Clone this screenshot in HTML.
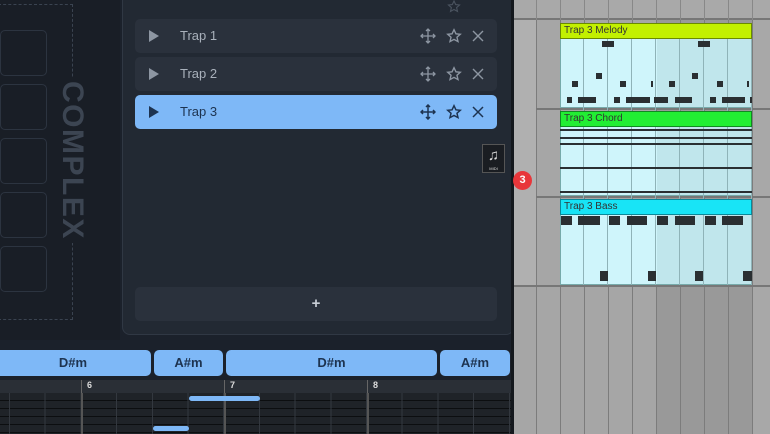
<!DOCTYPE html>
<html><head><style>
*{margin:0;padding:0;box-sizing:border-box}
body{width:770px;height:434px;overflow:hidden;background:#1b212b;font-family:"Liberation Sans",sans-serif;position:relative}
.a{position:absolute}
.pad{position:absolute;left:0;width:47px;height:46px;border:1px solid #2c3440;border-radius:5px}
.row{position:absolute;left:135px;width:362px;height:34px;border-radius:5px;background:#2a313c;color:#a9b1bb;font-size:13px}
.row .t{position:absolute;left:45px;top:9px}
.tri{position:absolute;left:14px;top:11px;width:0;height:0;border-left:10px solid #8d96a2;border-top:6px solid transparent;border-bottom:6px solid transparent}
.ic{position:absolute;top:9px}
.chord{position:absolute;top:350px;height:26px;background:#7eb8f7;border-radius:5px;color:#1d3350;font-weight:bold;font-size:13px;text-align:center;line-height:26px}
.n{position:absolute;background:#2a2f32}
.cl{position:absolute;left:560px;width:192px}
</style></head><body>
<div class="a" style="left:0;top:0;width:120px;height:340px;background:#191e26"></div>
<div class="a" style="left:-2px;top:4px;width:75px;height:316px;border:1px dashed #3a4350;border-left:none"></div>
<div class="pad" style="top:30px"></div><div class="pad" style="top:84px"></div><div class="pad" style="top:138px"></div><div class="pad" style="top:192px"></div><div class="pad" style="top:246px"></div>
<div class="a" style="left:72px;top:78px;width:0;height:0"><div style="transform:rotate(90deg);transform-origin:0 0;position:absolute;left:15px;top:0;font-size:30px;font-weight:bold;color:#3c4552;letter-spacing:1.5px;white-space:nowrap;background:#191e26;padding:0 3px;line-height:30px">COMPLEX</div></div>
<div class="a" style="left:122px;top:-10px;width:392px;height:345px;background:#222933;border:1px solid #303844;border-radius:8px"></div>
<svg class="a" style="left:447px;top:0" width="14" height="13" viewBox="0 0 14 13"><path d="M7 1l1.7 3.6 3.8.4-2.9 2.6.9 3.8L7 9.5 3.5 11.4l.9-3.8L1.5 5l3.8-.4z" fill="none" stroke="#4b5460" stroke-width="1.1"/></svg>
<div class="row" style="top:19px"><div class="tri"></div><div class="t">Trap 1</div>
<svg class="ic" style="left:285px" width="16" height="16" viewBox="0 0 16 16" fill="none" stroke="#8d96a2" stroke-width="1.3"><path d="M8 1v14M1 8h14M6 3l2-2 2 2M6 13l2 2 2-2M3 6L1 8l2 2M13 6l2 2-2 2"/></svg>
<svg class="ic" style="left:311px" width="16" height="16" viewBox="0 0 14 13"><path d="M7 1l1.7 3.6 3.8.4-2.9 2.6.9 3.8L7 9.5 3.5 11.4l.9-3.8L1.5 5l3.8-.4z" fill="none" stroke="#8d96a2" stroke-width="1.2"/></svg>
<svg class="ic" style="left:337px;top:11px" width="12" height="12" viewBox="0 0 12 12" stroke="#8d96a2" stroke-width="1.4"><path d="M1 1l10 10M11 1L1 11"/></svg></div>
<div class="row" style="top:57px"><div class="tri"></div><div class="t">Trap 2</div>
<svg class="ic" style="left:285px" width="16" height="16" viewBox="0 0 16 16" fill="none" stroke="#8d96a2" stroke-width="1.3"><path d="M8 1v14M1 8h14M6 3l2-2 2 2M6 13l2 2 2-2M3 6L1 8l2 2M13 6l2 2-2 2"/></svg>
<svg class="ic" style="left:311px" width="16" height="16" viewBox="0 0 14 13"><path d="M7 1l1.7 3.6 3.8.4-2.9 2.6.9 3.8L7 9.5 3.5 11.4l.9-3.8L1.5 5l3.8-.4z" fill="none" stroke="#8d96a2" stroke-width="1.2"/></svg>
<svg class="ic" style="left:337px;top:11px" width="12" height="12" viewBox="0 0 12 12" stroke="#8d96a2" stroke-width="1.4"><path d="M1 1l10 10M11 1L1 11"/></svg></div>
<div class="row" style="top:95px;background:#7eb8f7;color:#1d3350"><div class="tri" style="border-left-color:#1d3350"></div><div class="t">Trap 3</div>
<svg class="ic" style="left:285px" width="16" height="16" viewBox="0 0 16 16" fill="none" stroke="#1d3350" stroke-width="1.5"><path d="M8 1v14M1 8h14M6 3l2-2 2 2M6 13l2 2 2-2M3 6L1 8l2 2M13 6l2 2-2 2"/></svg>
<svg class="ic" style="left:311px" width="16" height="16" viewBox="0 0 14 13"><path d="M7 1l1.7 3.6 3.8.4-2.9 2.6.9 3.8L7 9.5 3.5 11.4l.9-3.8L1.5 5l3.8-.4z" fill="none" stroke="#1d3350" stroke-width="1.3"/></svg>
<svg class="ic" style="left:337px;top:11px" width="12" height="12" viewBox="0 0 12 12" stroke="#1d3350" stroke-width="1.5"><path d="M1 1l10 10M11 1L1 11"/></svg></div>
<div class="a" style="left:135px;top:287px;width:362px;height:34px;border-radius:5px;background:#2a313c;color:#c8ced6;text-align:center;line-height:34px;font-size:15px;font-weight:bold">+</div>
<div class="a" style="left:482px;top:144px;width:23px;height:29px;background:#1a1d22;border:1px solid #555;color:#ddd;font-size:15px;text-align:center;line-height:22px">♫<div style="font-size:4px;line-height:4px">MIDI</div></div>
<div class="chord" style="left:-5px;width:156px">D#m</div>
<div class="chord" style="left:154px;width:69px">A#m</div>
<div class="chord" style="left:226px;width:211px">D#m</div>
<div class="chord" style="left:440px;width:70px">A#m</div>
<div class="a" style="left:0;top:380px;width:511px;height:13px;background:#2a2f36;color:#ddd;font-size:9px;font-weight:bold">
<span class="a" style="left:81px;top:0;height:13px;border-left:1px solid #666;padding-left:5px">6</span>
<span class="a" style="left:224px;top:0;height:13px;border-left:1px solid #666;padding-left:5px">7</span>
<span class="a" style="left:367px;top:0;height:13px;border-left:1px solid #666;padding-left:5px">8</span></div>
<div class="a" style="left:0;top:393px;width:511px;height:41px;background:repeating-linear-gradient(#1f2328 0 7px,#0c0e10 7px 8px)"></div>
<div class="a" style="left:0;top:393px;width:511px;height:41px;background:repeating-linear-gradient(90deg,transparent 0 9px,#33383f 9px 10px,transparent 10px 35.7px)"></div>
<div class="a" style="left:81px;top:393px;width:2px;height:41px;background:#555"></div>
<div class="a" style="left:224px;top:393px;width:2px;height:41px;background:#555"></div>
<div class="a" style="left:367px;top:393px;width:2px;height:41px;background:#555"></div>
<div class="a" style="left:189px;top:396px;width:71px;height:5px;background:#7eb8f7;border-radius:3px"></div>
<div class="a" style="left:153px;top:426px;width:36px;height:5px;background:#7eb8f7;border-radius:3px"></div>
<div class="a" style="left:511px;top:0;width:3px;height:434px;background:#14181d"></div>
<div class="a" style="left:514px;top:0;width:256px;height:434px;background:linear-gradient(90deg,#a6a6a6 0 142px,#999 142px 238px,#a8a8a8 238px)"></div>
<div class="a" style="left:514px;top:0;width:256px;height:434px;background:repeating-linear-gradient(90deg,transparent 0 22px,#7c7c7c 22px 23px,transparent 23px 24px)"></div>
<div class="a" style="left:514px;top:0;width:256px;height:20px;background:#a9a9a9;border-bottom:2px solid #777"></div>
<div class="a" style="left:514px;top:0;width:256px;height:20px;background:repeating-linear-gradient(90deg,transparent 0 22px,#888 22px 23px,transparent 23px 24px)"></div>
<div class="a" style="left:514px;top:108px;width:256px;height:2px;background:#777"></div>
<div class="a" style="left:514px;top:196px;width:256px;height:2px;background:#777"></div>
<div class="a" style="left:514px;top:285px;width:256px;height:2px;background:#777"></div>
<div class="a" style="left:514px;top:20px;width:22px;height:265px;background:#b0b0b0"></div>
<div class="cl" style="top:23px;height:85px;background:linear-gradient(90deg,#cff5fb 0 96px,#c0e6ec 96px);border:1px solid #7aa"></div>
<div class="cl" style="top:111px;height:85px;background:linear-gradient(90deg,#cff5fb 0 96px,#c0e6ec 96px);border:1px solid #7aa"></div>
<div class="cl" style="top:199px;height:86px;background:linear-gradient(90deg,#cff5fb 0 96px,#c0e6ec 96px);border:1px solid #7aa"></div>
<div class="cl" style="top:23px;height:262px;background:repeating-linear-gradient(90deg,transparent 0 23px,#8fb3b8 23px 24px)"></div>
<div class="cl" style="top:23px;height:16px;background:#c2f000;border:1px solid #6a8a00;font-size:10px;color:#333;padding-left:3px;line-height:14px">Trap 3 Melody</div>
<div class="cl" style="top:111px;height:16px;background:#22ee33;border:1px solid #118822;font-size:10px;color:#333;padding-left:3px;line-height:14px">Trap 3 Chord</div>
<div class="cl" style="top:199px;height:16px;background:#18e4f6;border:1px solid #0a8899;font-size:10px;color:#333;padding-left:3px;line-height:14px">Trap 3 Bass</div>
<div class="n" style="left:602px;top:41px;width:12px;height:6px"></div><div class="n" style="left:698px;top:41px;width:12px;height:6px"></div>
<div class="n" style="left:596px;top:73px;width:6px;height:6px"></div><div class="n" style="left:692px;top:73px;width:6px;height:6px"></div>
<div class="n" style="left:572px;top:81px;width:6px;height:6px"></div><div class="n" style="left:620px;top:81px;width:6px;height:6px"></div><div class="n" style="left:651px;top:81px;width:2px;height:6px"></div><div class="n" style="left:669px;top:81px;width:6px;height:6px"></div><div class="n" style="left:717px;top:81px;width:6px;height:6px"></div><div class="n" style="left:747px;top:81px;width:2px;height:6px"></div>
<div class="n" style="left:567px;top:97px;width:5px;height:6px"></div><div class="n" style="left:578px;top:97px;width:18px;height:6px"></div><div class="n" style="left:614px;top:97px;width:6px;height:6px"></div><div class="n" style="left:626px;top:97px;width:24px;height:6px"></div><div class="n" style="left:654px;top:97px;width:14px;height:6px"></div><div class="n" style="left:675px;top:97px;width:17px;height:6px"></div><div class="n" style="left:710px;top:97px;width:6px;height:6px"></div><div class="n" style="left:722px;top:97px;width:23px;height:6px"></div><div class="n" style="left:750px;top:97px;width:2px;height:6px"></div>
<div class="n" style="left:560px;top:129px;width:192px;height:2px"></div><div class="n" style="left:560px;top:137px;width:192px;height:2px"></div><div class="n" style="left:560px;top:143px;width:192px;height:2px"></div><div class="n" style="left:560px;top:167px;width:192px;height:2px"></div><div class="n" style="left:560px;top:191px;width:192px;height:2px"></div>
<div class="n" style="left:561px;top:216px;width:11px;height:9px"></div><div class="n" style="left:578px;top:216px;width:22px;height:9px"></div><div class="n" style="left:609px;top:216px;width:11px;height:9px"></div><div class="n" style="left:627px;top:216px;width:20px;height:9px"></div><div class="n" style="left:657px;top:216px;width:11px;height:9px"></div><div class="n" style="left:675px;top:216px;width:20px;height:9px"></div><div class="n" style="left:705px;top:216px;width:11px;height:9px"></div><div class="n" style="left:722px;top:216px;width:21px;height:9px"></div>
<div class="n" style="left:600px;top:271px;width:8px;height:10px"></div><div class="n" style="left:648px;top:271px;width:8px;height:10px"></div><div class="n" style="left:695px;top:271px;width:8px;height:10px"></div><div class="n" style="left:743px;top:271px;width:9px;height:10px"></div>
<div class="a" style="left:513px;top:171px;width:19px;height:19px;border-radius:50%;background:#e8363a;color:#fff;font-size:11px;font-weight:bold;text-align:center;line-height:19px">3</div>
</body></html>
